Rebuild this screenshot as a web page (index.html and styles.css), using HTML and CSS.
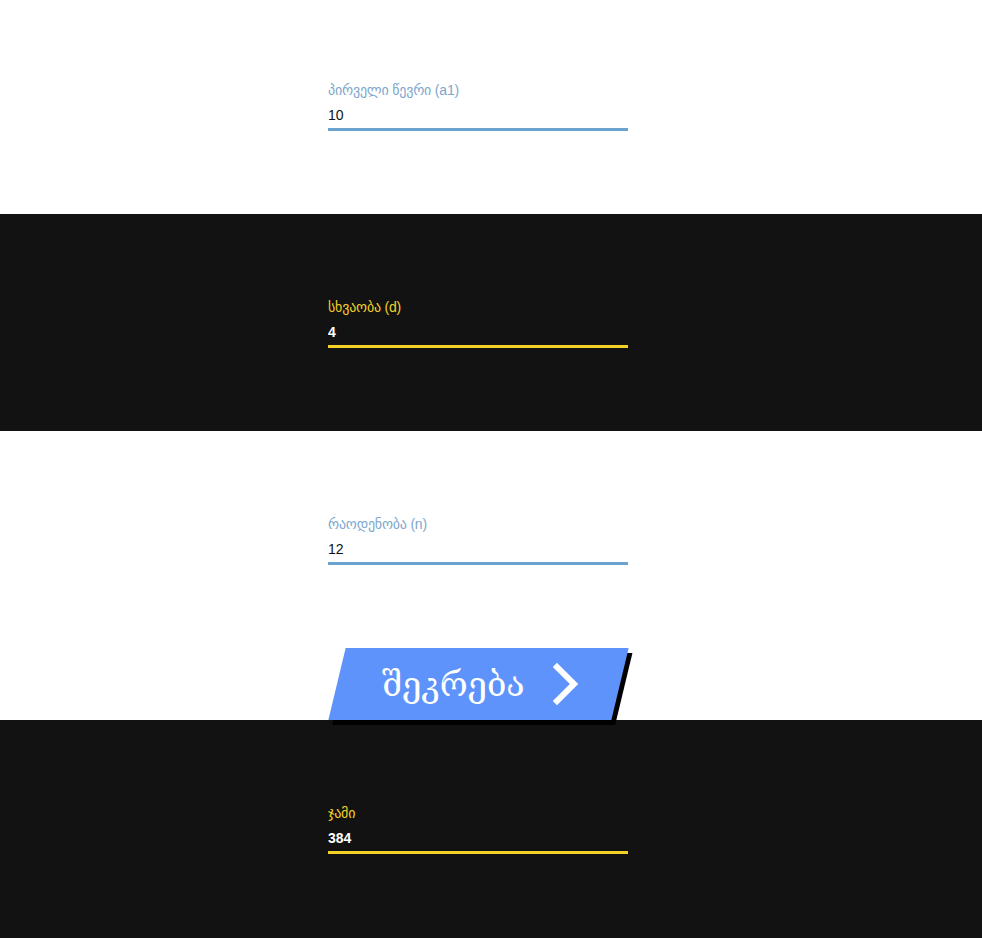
FILE: index.html
```html
<!DOCTYPE html>
<html lang="ka">
<head>
<meta charset="utf-8">
<title>არითმეტიკული პროგრესია</title>
<link rel="stylesheet" href="styles.css">
</head>
<body>
  <section class="band band-light band-first">
    <div class="field">
      <label class="label" for="a1">პირველი წევრი (a1)</label>
      <input class="input" id="a1" type="text" value="10">
    </div>
  </section>
  <section class="band band-dark">
    <div class="field">
      <label class="label" for="d">სხვაობა (d)</label>
      <input class="input" id="d" type="text" value="4">
    </div>
  </section>
  <section class="band band-light band-form">
    <div class="field">
      <label class="label" for="n">რაოდენობა (n)</label>
      <input class="input" id="n" type="text" value="12">
    </div>
    <button class="submit" type="button">
      <span class="submit-inner">
        <span class="submit-text">შეკრება</span>
        <svg class="chevron" width="26" height="42" viewBox="0 0 26 42" aria-hidden="true">
          <polyline points="4,4 21,21 4,38" fill="none" stroke="#ffffff" stroke-width="6" stroke-linecap="square" stroke-linejoin="miter"/>
        </svg>
      </span>
    </button>
  </section>
  <section class="band band-dark band-last">
    <div class="field">
      <label class="label" for="sum">ჯამი</label>
      <input class="input" id="sum" type="text" value="384" readonly>
    </div>
  </section>
</body>
</html>
```
FILE: styles.css
```css
html, body {
  margin: 0;
  padding: 0;
}

body {
  background: #ffffff;
  font-family: "Liberation Sans", "DejaVu Sans", Arial, sans-serif;
}

.band {
  padding: 84px 0 83px 328px;
}

.band-first {
  padding-top: 81px;
  padding-bottom: 83px;
}

.band-last {
  padding-bottom: 84px;
}

.band-form {
  padding-bottom: 0;
}

.band-light {
  background: #ffffff;
}

.band-dark {
  background: #121212;
}

.field {
  width: 300px;
  display: flex;
  flex-direction: column;
}

.label {
  font-size: 14px;
  line-height: 18px;
  height: 18px;
  margin-bottom: 3px;
  letter-spacing: -0.2px;
}

.band-light .label {
  color: #7ea7cd;
}

.band-dark .label {
  color: #f3d026;
}

.input {
  box-sizing: border-box;
  height: 29px;
  width: 300px;
  margin: 0;
  padding: 0;
  border: 0;
  border-bottom: 3px solid #6aa3d0;
  background: transparent;
  font-family: "Liberation Sans", Arial, sans-serif;
  font-size: 14px;
  color: #111111;
  outline: none;
}

.band-dark .input {
  border-bottom-color: #f3d026;
  color: #ffffff;
  font-weight: bold;
}

.submit {
  position: relative;
  z-index: 2;
  display: block;
  margin: 83px 0 0 9px;
  width: 283px;
  height: 72px;
  padding: 0;
  border: 0;
  background: #5e93fb;
  box-shadow: 5px 5px 0 #000000;
  transform: skewX(-13.5deg);
  cursor: pointer;
}

.submit-inner {
  display: flex;
  align-items: center;
  height: 100%;
  padding-left: 45px;
  gap: 28px;
  transform: skewX(13.5deg);
}

.submit-text {
  font-family: "DejaVu Serif", "DejaVu Sans", serif;
  font-size: 34px;
  line-height: 40px;
  color: #ffffff;
}

.chevron {
  display: block;
  flex: none;
}
```
